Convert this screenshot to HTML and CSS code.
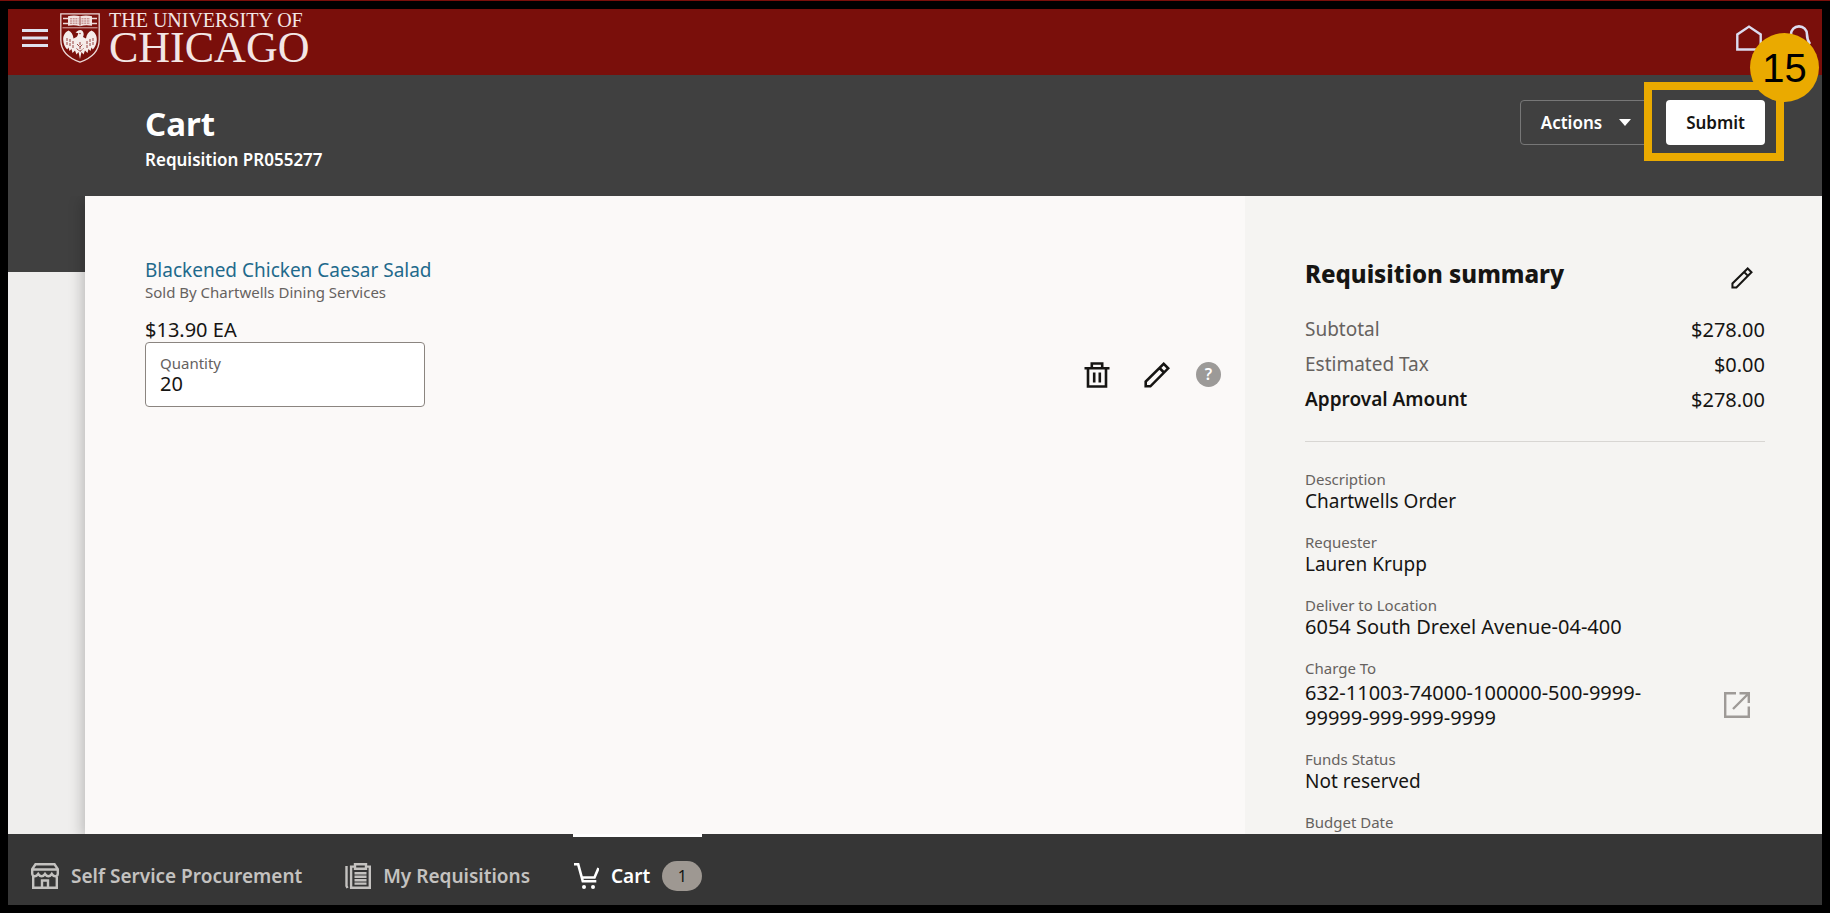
FILE: index.html
```html
<!DOCTYPE html>
<html lang="en">
<head>
<meta charset="utf-8">
<title>Cart - Requisition PR055277</title>
<link rel="stylesheet" href="styles.css">
</head>
<body>
<div class="frame">
  <header class="topbar">
    <button class="icon-btn menu" aria-label="Menu">
      <svg width="26" height="18" viewBox="0 0 26 18" fill="#dfe1ee"><path d="M0 0h26v3H0zM0 7.5h26v3H0zM0 15h26v3H0z"/></svg>
    </button>
    <a class="brand" href="#" aria-label="The University of Chicago">
      <svg class="shield" width="40" height="50" viewBox="0 0 40 50">
        <path d="M.8.8h38.4v26c0 11-8 18.500-19.200 22.400C8.800 45.300.8 37.800.8 26.800z" fill="#7a0f0b" stroke="#ecd9d7" stroke-width="1.300"/>
        <path d="M2.500 14.800h35" stroke="#d9b5b3" stroke-width="1"/>
        <path d="M8 3.200c4-1 8-1 12 0 4-1 8-1 12 0v9.600c-4-.8-8-.8-12 .4-4-1.200-8-1.200-12-.4z" fill="#f0e2e0"/>
        <path d="M3 5.500h5M3 10.500h5M32 5.500h5M32 10.500h5" stroke="#ecd9d7" stroke-width="1.300"/>
        <path d="M20 3.500v9" stroke="#7a0f0b" stroke-width=".8"/>
        <path d="M10 5.800h8.500M10 8h8.500M10 10.200h8.500M21.500 5.800H30M21.500 8H30M21.500 10.200H30" stroke="#a85450" stroke-width=".8" stroke-dasharray="2 .7"/>
        <path d="M8.500 17.500C5 19 3 22.500 3.200 27c.3 4 1.500 7 4 9.500l1.300-2 1 3.500 2-2 1 4 2.500-2.500 1.500 4 2-2.500L20 46l1.500-7 2 2.500 1.500-4 2.500 2.500 1-4 2 2 1-3.500 1.300 2c2.500-2.500 3.700-5.500 4-9.500.2-4.500-1.800-8-5.300-9.500-3 1.500-5 4-5.500 8l-3-1.500c1-2 1-4-.5-6-1-1.300-3-1.500-4.200-.4l-2.800 1.900 2.800.8c-.3 1.600-.8 2.700-1.800 3.700l-3 1.500c-.5-4-2-6.500-5-8z" fill="#f5ecea"/>
        <path d="M7 25v8M10 26v8M13 28v7M27 28v7M30 26v8M33 25v8M20 29v9M17 31l3 3 3-3M16.500 35.500l3.500 3 3.500-3" fill="none" stroke="#8f302c" stroke-width=".9" stroke-dasharray="3 1"/>
        <circle cx="20" cy="20.500" r=".7" fill="#7a0f0b"/>
      </svg>
      <span class="wordmark"><span class="wordmark-top">THE UNIVERSITY OF</span><span class="wordmark-main">CHICAGO</span></span>
    </a>
    <div class="topbar-tools">
      <button class="icon-btn" aria-label="Home">
        <svg width="26" height="26" viewBox="0 0 26 26" fill="none" stroke="#dcdcf0" stroke-width="2.400"><path d="M1.300 24.500V9.500L13 1.600l11.700 7.900v15z"/></svg>
      </button>
      <button class="icon-btn" aria-label="Notifications">
        <svg width="26" height="26" viewBox="0 0 26 26" fill="none" stroke="#dcdcf0" stroke-width="2.600"><path d="M2 20.500h22M4.800 20c0-4 .2-7 .2-10.500C5 4.500 8.500 1.400 13 1.400s8 3.100 8 8.100c0 3.500.5 6 3 9.500M10 23.500h6"/></svg>
      </button>
    </div>
  </header>

  <section class="page-head">
    <div>
      <h1>Cart</h1>
      <p class="subtitle">Requisition PR055277</p>
    </div>
    <div class="head-actions">
      <button class="btn btn-outline">Actions
        <svg width="12" height="7" viewBox="0 0 12 7" fill="#fff"><path d="M0 0h12L6 7z"/></svg>
      </button>
      <div class="submit-wrap">
        <button class="btn btn-solid">Submit</button>
        <div class="callout"><span class="callout-number">15</span></div>
      </div>
    </div>
  </section>

  <div class="stage">
    <main class="cart">
      <a class="item-name" href="#">Blackened Chicken Caesar Salad</a>
      <p class="seller">Sold By Chartwells Dining Services</p>
      <p class="price">$13.90 EA</p>
      <div class="item-row">
        <div class="field">
          <label for="qty">Quantity</label>
          <input id="qty" type="text" value="20">
        </div>
        <div class="item-tools">
          <button class="icon-btn" aria-label="Delete">
            <svg width="26" height="26" viewBox="0 0 26 26" fill="none" stroke="#161513" stroke-width="2.600"><path d="M.5 6.200h25M7.800 6V1.500h10.400V6M4 6.500v18h18v-18M10.200 10.500v10M15.800 10.500v10"/></svg>
          </button>
          <button class="icon-btn" aria-label="Edit">
            <svg width="26" height="26" viewBox="0 0 26 26" fill="none" stroke="#161513" stroke-width="2.600"><path d="M1.700 24.300V19.500L19.700 1.800l4.500 4.500L6.400 24.300zM15.500 6l4.500 4.500"/></svg>
          </button>
          <button class="help" aria-label="Help">?</button>
        </div>
      </div>
    </main>

    <aside class="summary">
      <div class="summary-head">
        <h2>Requisition summary</h2>
        <button class="icon-btn" aria-label="Edit summary">
          <svg width="22" height="22" viewBox="0 0 26 26" fill="none" stroke="#161513" stroke-width="2.400"><path d="M1.700 24.300V19.500L19.700 1.800l4.500 4.500L6.400 24.300zM15.500 6l4.500 4.500"/></svg>
        </button>
      </div>
      <dl class="totals">
        <div><dt>Subtotal</dt><dd>$278.00</dd></div>
        <div><dt>Estimated Tax</dt><dd>$0.00</dd></div>
        <div><dt class="strong">Approval Amount</dt><dd>$278.00</dd></div>
      </dl>
      <dl class="details">
        <div><dt>Description</dt><dd>Chartwells Order</dd></div>
        <div><dt>Requester</dt><dd>Lauren Krupp</dd></div>
        <div><dt>Deliver to Location</dt><dd class="numeric">6054 South Drexel Avenue-04-400</dd></div>
        <div class="charge">
          <dt>Charge To</dt>
          <dd><span class="account">632-11003-74000-100000-500-9999-<br>99999-999-999-9999</span>
            <button class="icon-btn" aria-label="Open charge account">
              <svg width="26" height="26" viewBox="0 0 26 26" fill="none" stroke="#9e9a97" stroke-width="2.400"><path d="M12 1.200H1.200v23.600h23.600V14.500M15.500 1.200h9.300V11M24.500 1.500L9 17"/></svg>
            </button>
          </dd>
        </div>
        <div><dt>Funds Status</dt><dd>Not reserved</dd></div>
        <div><dt>Budget Date</dt></div>
      </dl>
    </aside>
  </div>

  <nav class="bottom-nav">
    <a href="#">
      <svg width="28" height="26" viewBox="0 0 28 26" fill="none" stroke="#c4c2c0" stroke-width="2.400"><path d="M4.500 1.200h19L26.800 6v4.500c0 1.600-1 2.700-2.600 2.700s-2.600-1-3.400-2.200c-.8 1.200-1.800 2.200-3.400 2.200S14.800 12.200 14 11c-.8 1.200-1.800 2.200-3.400 2.200S8 12.200 7.200 11c-.8 1.200-1.800 2.200-3.400 2.200S1.200 12.100 1.200 10.500V6zM2 6.500h24M2.200 13v11.700h23.600V13M11 24.500v-7h6v7"/></svg>
      Self Service Procurement
    </a>
    <a href="#">
      <svg width="26" height="26" viewBox="0 0 26 26" fill="none" stroke="#c4c2c0" stroke-width="2.400"><path d="M1.500 3v20l1 2M9.500 3.600H6.100v21.200h18.700V3.600h-3.400M10 1.200h11v4.500H10zM9.500 10.300h12M9.500 13.800h12M9.500 17.300h12M9.500 20.600h12"/></svg>
      My Requisitions
    </a>
    <a class="active" href="#" aria-current="page">
      <svg width="26" height="26" viewBox="0 0 26 26" fill="none" stroke="#fff" stroke-width="2.600"><path d="M1 1.300h4.200l4.600 17h13.500M8.800 14.500h12.700l4-9.500"/><circle cx="11" cy="24" r="2" fill="#fff" stroke="none"/><circle cx="20" cy="24" r="2" fill="#fff" stroke="none"/></svg>
      Cart
      <span class="badge">1</span>
    </a>
  </nav>
</div>
</body>
</html>
```
FILE: styles.css
```css
* { box-sizing: border-box; margin: 0; padding: 0; }

body {
  background: #000;
  color: #161513;
  font-family: "Noto Sans", "Open Sans", sans-serif;
  font-size: 19px;
}

button, input { font: inherit; color: inherit; }
a { color: inherit; text-decoration: none; }

.frame {
  display: flex;
  flex-direction: column;
  height: 100vh;
  padding: 8px;
  border-top: 1px solid #7a0f0b;
  overflow: hidden;
}

.icon-btn {
  display: flex;
  flex: none;
  background: none;
  border: 0;
}

/* Top bar */
.topbar {
  display: flex;
  flex: none;
  align-items: center;
  height: 66px;
  padding: 0 10px 0 14px;
  background: #7a0f0b;
}
.menu { margin-bottom: 8px; }
.brand {
  display: flex;
  align-items: center;
  gap: 9px;
  margin: 0 0 8px 12px;
}
.wordmark {
  display: flex;
  flex-direction: column;
  color: #f3e6e5;
  font-family: "Liberation Serif", serif;
}
.wordmark-top { font-size: 20px; line-height: 20px; }
.wordmark-main { font-size: 44px; line-height: 36px; }
.topbar-tools {
  display: flex;
  gap: 24px;
  margin: 0 0 0 auto;
  padding-bottom: 8px;
}

/* Page heading */
.page-head {
  display: flex;
  flex: none;
  justify-content: space-between;
  height: 121px;
  padding: 25px 57px 0 137px;
  background: #404040;
  color: #fff;
}
h1 { font-size: 33px; font-weight: 700; line-height: 47px; }
.subtitle { font-size: 17px; font-weight: 600; line-height: 26px; }
.head-actions { display: flex; align-items: flex-start; gap: 14px; }
.btn {
  display: flex;
  align-items: center;
  height: 45px;
  padding: 0 20px;
  border-radius: 4px;
  font-size: 17px;
  font-weight: 600;
}
.btn-outline {
  gap: 17px;
  background: transparent;
  border: 1px solid #777;
}
.btn-solid { background: #fff; border: 0; color: #161513; }
.submit-wrap { position: relative; }
.callout {
  position: absolute;
  inset: -18px -19px -16px -22px;
  border: 8px solid #eaaa00;
}
.callout-number {
  position: absolute;
  top: -57px;
  right: -43px;
  width: 69px;
  height: 69px;
  border-radius: 50%;
  background: #eaaa00;
  color: #000;
  font-family: "Liberation Sans", sans-serif;
  font-size: 40px;
  line-height: 70px;
  text-align: center;
}

/* Content */
.stage {
  display: flex;
  flex: 1;
  min-height: 0;
  padding-left: 77px;
  overflow: hidden;
  background: linear-gradient(#404040 76px, #efeeed 76px);
}
.cart {
  flex: 1;
  padding: 62px 24px 0 60px;
  background: #fbf9f8;
  box-shadow: -2px 4px 14px rgba(0, 0, 0, 0.24);
}
.item-name { display: block; color: #1f6a8c; line-height: 24px; }
.seller { color: #66625f; font-size: 15px; line-height: 20px; }
.price { margin-top: 16px; font-size: 20px; line-height: 24px; }
.item-row { display: flex; align-items: center; justify-content: space-between; }
.field {
  width: 280px;
  height: 65px;
  padding: 11px 14px 0;
  background: #fff;
  border: 1px solid #8b8580;
  border-radius: 4px;
}
.field label { display: block; color: #66625f; font-size: 15px; line-height: 18px; }
.field input {
  display: block;
  width: 100%;
  background: none;
  border: 0;
  outline: 0;
  font-size: 20px;
  line-height: 24px;
}
.item-tools { display: flex; align-items: center; gap: 34px; }
.help {
  width: 25px;
  height: 25px;
  margin-left: -8px;
  border: 0;
  border-radius: 50%;
  background: #9c9a98;
  color: #fff;
  font-size: 16px;
  font-weight: 600;
  line-height: 25px;
}

/* Summary */
.summary {
  position: relative;
  flex: none;
  width: 577px;
  padding: 62px 57px 0 60px;
  background: #f5f4f2;
}
.summary-head {
  display: flex;
  align-items: center;
  justify-content: space-between;
  height: 40px;
  padding-right: 12px;
}
h2 { margin-bottom: 8px; font-size: 24px; font-weight: 800; line-height: 32px; }
.totals {
  margin-top: 14px;
  padding-bottom: 24px;
  border-bottom: 1px solid #d8d6d3;
  line-height: 35px;
}
.totals div { display: flex; justify-content: space-between; }
.totals dt { color: #66625f; }
.totals dd { font-size: 20px; }
.totals .strong { color: #161513; font-weight: 600; }
.details { display: flex; flex-direction: column; gap: 19px; margin-top: 27px; }
.details dt { color: #66625f; font-size: 15px; line-height: 20px; }
.details dd { line-height: 24px; }
.details .numeric, .account { font-size: 20px; }
.details .charge dd {
  display: flex;
  align-items: center;
  justify-content: space-between;
  padding: 2px 15px 0 0;
  line-height: 25px;
}

/* Bottom navigation */
.bottom-nav {
  display: flex;
  flex: none;
  gap: 43px;
  height: 71px;
  padding-left: 23px;
  background: #363636;
  color: #c4c2c0;
  font-weight: 600;
}
.bottom-nav a {
  display: flex;
  align-items: center;
  gap: 12px;
  padding-top: 10px;
  border-top: 3px solid transparent;
}
.bottom-nav .active { border-top-color: #fff; color: #fff; }
.badge {
  width: 40px;
  border-radius: 15px;
  background: #9e9892;
  color: #161513;
  font-size: 16px;
  font-weight: 400;
  line-height: 30px;
  text-align: center;
}
```
